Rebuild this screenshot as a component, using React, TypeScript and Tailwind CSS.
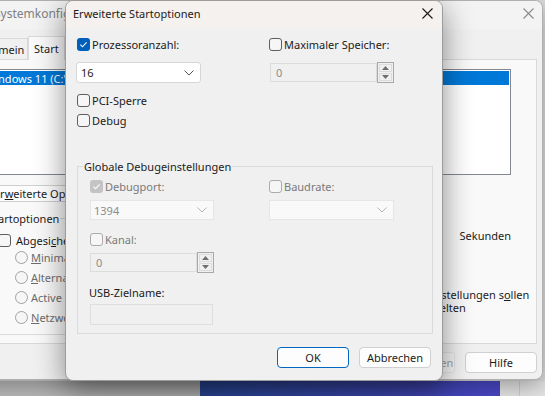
import React from "react";

const Box = ({ checked = false, disabled = false }: { checked?: boolean; disabled?: boolean }) => {
  if (checked) {
    return (
      <span
        className={`flex h-[13px] w-[13px] shrink-0 items-center justify-center rounded-[3px] ${
          disabled ? "bg-[#c4c4c4]" : "bg-[#005fb8]"
        }`}
      >
        <svg width="9" height="9" viewBox="0 0 9 9">
          <path d="M1.4 4.7 3.5 6.8 7.6 2.4" fill="none" stroke="#fff" strokeWidth="1.1" />
        </svg>
      </span>
    );
  }
  return (
    <span
      className={`h-[13px] w-[13px] shrink-0 rounded-[3px] border ${
        disabled ? "border-[#ababab] bg-[#f6f6f6]" : "border-[#5e5e5e] bg-[#f6f6f6]"
      }`}
    />
  );
};

const Radio = () => (
  <span className="h-[13px] w-[13px] shrink-0 rounded-full border border-[#a2a2a2] bg-[#f6f6f6]" />
);

const Chevron = ({ color }: { color: string }) => (
  <svg width="10" height="6" viewBox="0 0 10 6">
    <path d="M0.5 0.5 5 5 9.5 0.5" fill="none" stroke={color} strokeWidth="1" />
  </svg>
);

const CloseX = ({ color }: { color: string }) => (
  <svg width="11" height="11" viewBox="0 0 11 11">
    <path d="M0.5 0.5 10.5 10.5M10.5 0.5 0.5 10.5" stroke={color} strokeWidth="1.1" />
  </svg>
);

const Spin = () => (
  <div className="flex h-[21px] w-[17px] shrink-0 flex-col gap-[1px] border border-[#a9a9a9] bg-[#f0f0f0] p-[1px]">
    <div className="flex flex-1 items-center justify-center border border-[#dcdcdc]">
      <svg width="7" height="4" viewBox="0 0 7 4">
        <path d="M0 4h7L3.5 0z" fill="#6f6f6f" />
      </svg>
    </div>
    <div className="flex flex-1 items-center justify-center border border-[#dcdcdc]">
      <svg width="7" height="4" viewBox="0 0 7 4">
        <path d="M0 0h7L3.5 4z" fill="#6f6f6f" />
      </svg>
    </div>
  </div>
);

const DialogButton = ({ label, primary = false }: { label: string; primary?: boolean }) => (
  <button
    className={`flex h-[21px] w-[72px] items-center justify-center rounded-[4px] border bg-[#fdfdfd] ${
      primary ? "border-[#0067c0]" : "border-[#d0d0d0]"
    }`}
  >
    {label}
  </button>
);

const BootSettingsDialog = () => (
  <div className="absolute left-[65px] top-0 flex h-[381px] w-[378px] flex-col overflow-hidden rounded-[8px] border border-[#9c9c9c] bg-[#f0f0f0] shadow-[0_8px_30px_rgba(0,0,0,0.45)]">
    {/* Title bar */}
    <div className="flex h-[28px] shrink-0 items-center justify-between bg-[#f4f1ee] pb-[4px] pl-[7px] pr-[9px]">
      <span>Erweiterte Startoptionen</span>
      <CloseX color="#1a1a1a" />
    </div>

    <div className="flex flex-1 flex-col pl-[11px] pr-[11px] pt-[9px]">
      <div className="flex h-[13px] items-center">
        <label className="flex w-[192px] items-center gap-[2px]">
          <Box checked />
          Prozessoranzahl:
        </label>
        <label className="flex items-center gap-[2px]">
          <Box />
          Maximaler Speicher:
        </label>
      </div>

      <div className="mt-[11px] flex items-center">
        <div className="-ml-[1px] flex h-[21px] w-[125px] items-center justify-between rounded-[3px] border border-[#d6d6d6] bg-white pl-[4px] pr-[6px]">
          <span>16</span>
          <Chevron color="#555" />
        </div>
        <div className="ml-[69px] flex items-center">
          <div className="flex h-[19px] w-[107px] items-center border border-[#dcdcdc] bg-[#f0f0f0] pl-[5px] text-[#8c8c8c]">
            0
          </div>
          <Spin />
        </div>
      </div>

      <label className="mt-[10px] flex items-center gap-[2px]">
        <Box />
        PCI-Sperre
      </label>
      <label className="mt-[5px] flex items-center gap-[2px]">
        <Box />
        Debug
      </label>

      <fieldset className="mt-[31px] h-[175px] w-[356px] border border-[#dadada] pl-[12px]">
        <legend className="-ml-[7px] px-[1px]">Globale Debugeinstellungen</legend>
        <div className="mt-[5px] flex items-center text-[#7a7a7a]">
          <label className="flex w-[179px] items-center gap-[2px]">
            <Box checked disabled />
            Debugport:
          </label>
          <label className="flex items-center gap-[2px]">
            <Box disabled />
            Baudrate:
          </label>
        </div>
        <div className="mt-[6px] flex items-center">
          <div className="flex h-[20px] w-[124px] items-center justify-between border border-[#e6e6e6] bg-[#f9f9f9] pl-[3px] pr-[6px] text-[#8c8c8c]">
            <span>1394</span>
            <Chevron color="#b5b5b5" />
          </div>
          <div className="ml-[55px] flex h-[20px] w-[125px] items-center justify-end border border-[#e6e6e6] bg-[#f9f9f9] pr-[6px]">
            <Chevron color="#b5b5b5" />
          </div>
        </div>
        <label className="mt-[12px] flex items-center gap-[2px] text-[#7a7a7a]">
          <Box disabled />
          Kanal:
        </label>
        <div className="mt-[5px] flex items-center">
          <div className="flex h-[19px] w-[107px] items-center border border-[#dcdcdc] bg-[#f0f0f0] pl-[5px] text-[#8c8c8c]">
            0
          </div>
          <Spin />
        </div>
        <div className="mt-[12px] -ml-[1px]">USB-Zielname:</div>
        <div className="mt-[4px] h-[21px] w-[123px] border border-[#dedede] bg-[#f0f0f0]" />
      </fieldset>

      <div className="mt-[13px] flex justify-end gap-[10px]">
        <DialogButton label="OK" primary />
        <DialogButton label="Abbrechen" />
      </div>
    </div>
  </div>
);

const SystemConfigWindow = () => (
  <div className="absolute -left-[40px] top-0 flex h-[380px] w-[583px] flex-col overflow-hidden rounded-[8px] border border-[#b0b0b0] bg-[#f0f0f0] shadow-[0_6px_24px_rgba(0,0,0,0.35)]">
    <div className="flex h-[28px] shrink-0 items-center justify-between bg-[#f3f3f3] pb-[4px] pl-[33px] pr-[8px] text-[12px] text-[#808080]">
      <span>Systemkonfiguration</span>
      <CloseX color="#8a8a8a" />
    </div>

    <div className="flex flex-1 flex-col pl-[8px] pr-[5px]">
      {/* Tabs */}
      <div className="mt-[7px] flex h-[23px] items-end">
        <div className="flex h-[21px] w-[59px] items-center justify-center border border-b-0 border-[#d9d9d9] bg-[#f0f0f0]">
          Allgemein
        </div>
        <div className="relative -mb-[1px] flex h-[24px] items-center border border-b-0 border-[#d9d9d9] bg-[#f9f9f9] px-[5px]">
          Start
        </div>
        <div className="flex h-[21px] items-center border border-b-0 border-[#d9d9d9] px-[6px]">Dienste</div>
        <div className="flex h-[21px] items-center border border-b-0 border-[#d9d9d9] px-[6px]">Systemstart</div>
        <div className="flex h-[21px] items-center border border-b-0 border-[#d9d9d9] px-[6px]">Tools</div>
      </div>

      {/* Tab panel */}
      <div className="flex h-[285px] flex-col border border-[#d9d9d9] bg-[#f9f9f9] pl-[9px] pr-[25px] pt-[9px]">
        <div className="h-[106px] border border-[#828790] bg-white p-[1px]">
          <div className="flex h-[14px] items-center whitespace-nowrap bg-[#0078d7] pl-[4px] text-white">
            Windows 11 (C:\WINDOWS) : Aktuelles Betriebssystem; Standardbetriebssystem
          </div>
        </div>

        <div className="mt-[10px] flex gap-[8px]">
          <button className="flex h-[17px] w-[150px] items-center whitespace-nowrap border border-[#cfcfcf] bg-[#fdfdfd] pl-[14px]">
            <span>
              Er<span className="underline">w</span>eiterte Optionen...
            </span>
          </button>
        </div>

        <div className="mt-[9px] flex items-start">
          <fieldset className="h-[124px] w-[300px] border border-[#dadada] pl-[18px]">
            <legend className="ml-[-11px] px-[1px]">Startoptionen</legend>
            <label className="mt-[7px] flex items-center gap-[5px]">
              <Box />
              <span>
                Abgesi<span className="underline">c</span>herter Start
              </span>
            </label>
            <div className="ml-[17px] mt-[2px] flex flex-col gap-[5px] text-[#6d6d6d]">
              <label className="flex items-center gap-[3px]">
                <Radio />
                <span>
                  <span className="underline">M</span>inimal
                </span>
              </label>
              <label className="flex items-center gap-[3px]">
                <Radio />
                <span>
                  <span className="underline">A</span>lternative Shell
                </span>
              </label>
              <label className="flex items-center gap-[3px]">
                <Radio />
                <span>Active Directory-Reparatur</span>
              </label>
              <label className="flex items-center gap-[3px]">
                <Radio />
                <span>
                  <span className="underline">N</span>etzwerk
                </span>
              </label>
            </div>
          </fieldset>

          <div className="ml-auto flex w-[150px] flex-col">
            <div className="mt-[14px] flex items-center">
              <span className="w-[44px]">Timeout:</span>
              <span className="ml-[4px] h-[21px] w-[30px] border border-[#7a7a7a] bg-white" />
              <span className="ml-[24px]">Sekunden</span>
            </div>
            <label className="mt-[42px] flex items-start gap-[5px] leading-[13px]">
              <Box />
              <span className="whitespace-nowrap">
                Alle Starteinstellungen s<span className="underline">o</span>llen
                <br />
                dauerhaft gelten
              </span>
            </label>
          </div>
        </div>
      </div>

      {/* Footer */}
      <div className="mt-[8px] flex justify-end gap-[10px]">
        <DialogButton label="OK" />
        <DialogButton label="Abbrechen" />
        <button className="flex h-[21px] w-[72px] items-center justify-center rounded-[4px] border border-[#e3e3e3] bg-[#f5f5f5] text-[#a0a0a0]">
          Übernehmen
        </button>
        <DialogButton label="Hilfe" />
      </div>
    </div>
  </div>
);

export default function App() {
  return (
    <div className="relative flex h-[396px] w-[545px] flex-col justify-end overflow-hidden bg-[#dedede] font-['Noto_Sans',sans-serif] text-[11px] leading-[15px] text-[#1b1b1b]">
      {/* desktop strip */}
      <div className="flex h-[15px]">
        <div className="w-[200px] bg-[#bcbcbc]" />
        <div className="w-[300px] bg-gradient-to-r from-[#2a4a9c] to-[#4a47c7]" />
        <div className="flex-1 bg-[#e6e6e6]">
          <div className="ml-[19px] h-full w-[1px] bg-[#cfcfcf]" />
        </div>
      </div>

      <SystemConfigWindow />
      <BootSettingsDialog />
    </div>
  );
}
